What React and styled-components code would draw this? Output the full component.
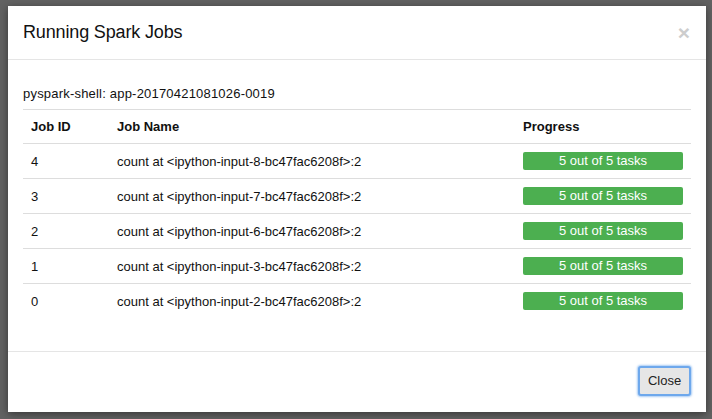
import React from "react";
import styled, { createGlobalStyle } from "styled-components";

const Global = createGlobalStyle`
  html, body { margin: 0; padding: 0; }
  body {
    background: #626262;
    font-family: "Liberation Sans", Arial, Helvetica, sans-serif;
    width: 712px;
    height: 419px;
    overflow: hidden;
  }
`;

const Backdrop = styled.div`
  padding: 6px 6px 0 8px;
  height: 419px;
  box-sizing: border-box;
`;

const Modal = styled.div`
  width: 698px;
  background: #fff;
  box-shadow: 0 2px 8px rgba(0, 0, 0, 0.45);
  display: flex;
  flex-direction: column;
  color: #000;
`;

const Header = styled.div`
  display: flex;
  align-items: center;
  justify-content: space-between;
  padding: 14px 15px 14px 15px;
  border-bottom: 1px solid #e5e5e5;
`;

const Title = styled.h4`
  margin: 0;
  font-size: 18px;
  line-height: 25px;
  font-weight: 500;
  letter-spacing: -0.15px;
  color: #111;
`;

const CloseX = styled.span`
  font-size: 21px;
  font-weight: 700;
  line-height: 1;
  color: #cdcdcd;
  margin-right: 1px;
`;

const Body = styled.div`
  padding: 26px 15px 32px 15px;
`;

const AppName = styled.h5`
  margin: 0 0 8px 0;
  font-size: 13px;
  line-height: 15px;
  font-weight: 500;
  letter-spacing: 0.2px;
  color: #111;
`;

const Table = styled.table`
  width: 100%;
  border-collapse: collapse;
  font-size: 13px;
  color: #111;
`;

const Th = styled.th`
  text-align: left;
  font-weight: 700;
  padding: 0 8px;
  height: 34px;
  border-top: 1px solid #ddd;
  border-bottom: 1px solid #ddd;
  width: ${(p) => p.$w || "auto"};
  box-sizing: border-box;
`;

const Td = styled.td`
  padding: 0 8px;
  height: 35px;
  box-sizing: border-box;
  border-top: ${(p) => (p.$first ? "none" : "1px solid #ddd")};
  vertical-align: middle;
`;

const Bar = styled.div`
  width: 160px;
  height: 18px;
  background: #4caf50;
  border-radius: 2px;
  color: #fff;
  font-size: 13px;
  line-height: 18px;
  text-align: center;
`;

const Footer = styled.div`
  display: flex;
  justify-content: flex-end;
  padding: 14px 15px 16px 15px;
  border-top: 1px solid #e5e5e5;
`;

const Button = styled.button`
  width: 53px;
  height: 30px;
  box-sizing: border-box;
  background: #e6e6e6;
  border: 2px solid #6ea8ec;
  box-shadow: 0 0 2px 1px rgba(110, 168, 236, 0.6);
  border-radius: 3px;
  font-family: "Liberation Sans", Arial, sans-serif;
  font-size: 13px;
  color: #222;
  padding: 0;
`;

const jobs = [
  { id: 4, n: 8 },
  { id: 3, n: 7 },
  { id: 2, n: 6 },
  { id: 1, n: 3 },
  { id: 0, n: 2 },
];

export default function App() {
  return (
    <>
      <Global />
      <Backdrop>
        <Modal>
          <Header>
            <Title>Running Spark Jobs</Title>
            <CloseX>×</CloseX>
          </Header>
          <Body>
            <AppName>pyspark-shell: app-20170421081026-0019</AppName>
            <Table>
              <thead>
                <tr>
                  <Th $w="86px">Job ID</Th>
                  <Th $w="406px">Job Name</Th>
                  <Th>Progress</Th>
                </tr>
              </thead>
              <tbody>
                {jobs.map((j, i) => (
                  <tr key={j.id}>
                    <Td $first={i === 0}>{j.id}</Td>
                    <Td $first={i === 0}>
                      {`count at <ipython-input-${j.n}-bc47fac6208f>:2`}
                    </Td>
                    <Td $first={i === 0}>
                      <Bar>5 out of 5 tasks</Bar>
                    </Td>
                  </tr>
                ))}
              </tbody>
            </Table>
          </Body>
          <Footer>
            <Button>Close</Button>
          </Footer>
        </Modal>
      </Backdrop>
    </>
  );
}
